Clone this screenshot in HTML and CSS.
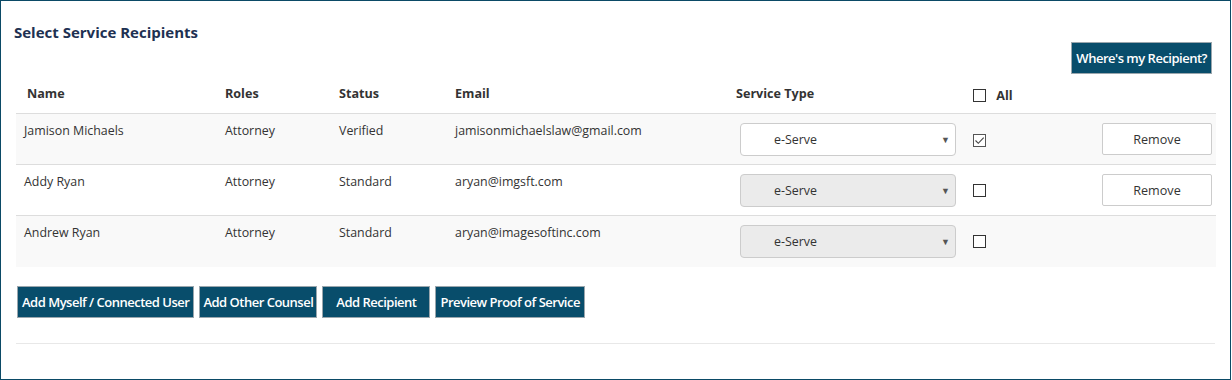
FILE: index.html
```html
<!DOCTYPE html>
<html lang="en">
<head>
  <meta charset="UTF-8">
  <title>Select Service Recipients</title>
  <link rel="stylesheet" href="styles.css">
</head>
<body>
  <div class="panel">
    <h2 class="title">Select Service Recipients</h2>

    <div class="top-actions">
      <button class="btn">Where's my Recipient?</button>
    </div>

    <table class="recipients">
      <colgroup>
        <col style="width:199px">
        <col style="width:114px">
        <col style="width:116px">
        <col style="width:285px">
        <col style="width:233px">
        <col style="width:129px">
        <col style="width:124px">
      </colgroup>
      <thead>
        <tr>
          <th class="first">Name</th>
          <th>Roles</th>
          <th>Status</th>
          <th>Email</th>
          <th class="type">Service Type</th>
          <th class="all"><span class="check"></span> All</th>
          <th></th>
        </tr>
      </thead>
      <tbody>
        <tr class="shaded">
          <td>Jamison Michaels</td>
          <td>Attorney</td>
          <td>Verified</td>
          <td>jamisonmichaelslaw@gmail.com</td>
          <td class="mid service"><div class="select">e-Serve <span class="arrow">&#9660;</span></div></td>
          <td class="mid"><span class="check checked"><svg width="11" height="11" viewBox="0 0 11 11"><path d="M1.5 5.5 L4.3 8.3 L9.7 2.6" fill="none" stroke="#444" stroke-width="1.1"/></svg></span></td>
          <td class="mid right"><button class="btn-light">Remove</button></td>
        </tr>
        <tr>
          <td>Addy Ryan</td>
          <td>Attorney</td>
          <td>Standard</td>
          <td>aryan@imgsft.com</td>
          <td class="mid service"><div class="select disabled">e-Serve <span class="arrow">&#9660;</span></div></td>
          <td class="mid"><span class="check"></span></td>
          <td class="mid right"><button class="btn-light">Remove</button></td>
        </tr>
        <tr class="shaded last">
          <td>Andrew Ryan</td>
          <td>Attorney</td>
          <td>Standard</td>
          <td>aryan@imagesoftinc.com</td>
          <td class="mid service"><div class="select disabled">e-Serve <span class="arrow">&#9660;</span></div></td>
          <td class="mid"><span class="check"></span></td>
          <td></td>
        </tr>
      </tbody>
    </table>

    <div class="bottom-actions">
      <button class="btn">Add Myself / Connected User</button>
      <button class="btn narrow">Add Other Counsel</button>
      <button class="btn wide">Add Recipient</button>
      <button class="btn">Preview Proof of Service</button>
    </div>

    <div class="divider"></div>
  </div>
</body>
</html>
```

FILE: styles.css
```css
body {
  margin: 0;
  font-family: "Open Sans", Arial, sans-serif;
  font-size: 13px;
  color: #333;
}
.panel {
  width: 1231px;
  height: 380px;
  border: 1px solid #0b4a66;
  padding: 0 15px;
  box-sizing: border-box;
}
.title {
  margin: 0 0 0 -2px;
  padding-top: 21px;
  font-size: 15px;
  line-height: 20px;
  font-weight: 700;
  color: #1e3152;
}
.top-actions {
  display: flex;
  justify-content: flex-end;
  padding-right: 3px;
}
.btn {
  height: 32px;
  padding: 0 4px;
  background-color: #084d6b;
  border: 1px solid #9aa6ad;
  color: #fff;
  font-family: "Open Sans", Arial, sans-serif;
  font-size: 13px;
  font-weight: 600;
  letter-spacing: -0.5px;
  cursor: pointer;
}
.recipients {
  width: 1200px;
  table-layout: fixed;
  border-collapse: collapse;
}
.recipients th {
  height: 28px;
  padding: 0 10px 11px;
  text-align: left;
  vertical-align: bottom;
  font-weight: 700;
  font-size: 12.6px;
  color: #333;
  border-bottom: 1px solid #ddd;
}
.recipients th.first {
  padding-left: 11px;
}
.recipients th.type {
  padding-left: 6px;
}
.recipients th.all {
  padding-bottom: 9px;
}
.recipients td {
  height: 51px;
  padding: 8px 10px 0;
  vertical-align: top;
  font-size: 12.4px;
  border-bottom: 1px solid #ddd;
  box-sizing: border-box;
}
.recipients td:first-child {
  padding-left: 8px;
}
.recipients tr.last td {
  border-bottom: none;
}
.recipients tr.shaded td {
  background-color: #f9f9f9;
}
.recipients td.mid {
  vertical-align: middle;
  padding-top: 0;
}
.recipients td.service {
  padding-right: 7px;
}
.recipients td.right {
  padding-right: 4px;
  text-align: right;
}
.select {
  display: flex;
  justify-content: space-between;
  align-items: center;
  height: 33px;
  padding: 0 5px 0 33px;
  border: 1px solid #ccc;
  border-radius: 4px;
  background: #fff;
  box-sizing: border-box;
}
.select.disabled {
  background: #ebebeb;
}
.arrow {
  font-size: 9px;
  color: #555;
}
.check {
  display: inline-flex;
  align-items: center;
  justify-content: center;
  width: 13px;
  height: 13px;
  border: 1px solid #333;
  background: #fff;
  box-sizing: border-box;
  vertical-align: -2px;
  margin-right: 7px;
}
.check.checked {
  border-color: #555;
}
.btn-light {
  width: 110px;
  height: 32px;
  background: #fff;
  border: 1px solid #ccc;
  border-radius: 2px;
  color: #333;
  font-family: "Open Sans", Arial, sans-serif;
  font-size: 12.6px;
  cursor: pointer;
}
.bottom-actions {
  display: flex;
  gap: 5px;
  margin-top: 19px;
  padding-left: 1px;
}
.bottom-actions .narrow {
  padding: 0 3px;
}
.bottom-actions .wide {
  padding: 0 13px;
}
.divider {
  margin-top: 25px;
  border-top: 1px solid #e8e8e8;
}
```
